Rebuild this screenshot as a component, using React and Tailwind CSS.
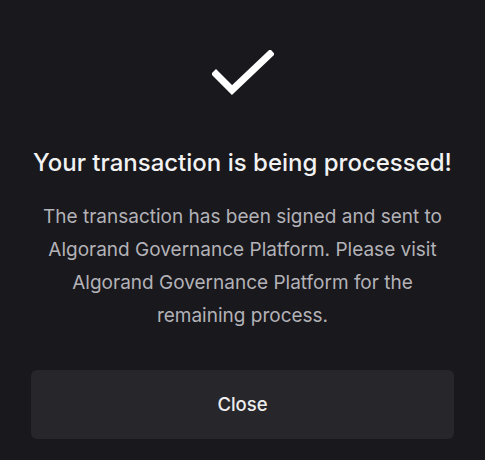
export default function App() {
  return (
    <div className="w-[485px] h-[460px] bg-[#19181d] flex flex-col items-center px-[31px] font-['Inter',sans-serif]">
      <svg width="62" height="46" viewBox="0 0 62 46" className="mt-[50px]" fill="none">
        <path d="M4 24 L20 40 L58 4" stroke="#ffffff" strokeWidth="7" strokeLinecap="square" />
      </svg>
      <h1 className="mt-[52px] text-[24px] leading-[30px] font-medium text-[#f2f2f2] whitespace-nowrap">
        Your transaction is being processed!
      </h1>
      <p className="mt-[22px] text-[19px] leading-[33px] text-[#b3b2b7] text-center whitespace-nowrap">
        The transaction has been signed and sent to
        <br />
        Algorand Governance Platform. Please visit
        <br />
        Algorand Governance Platform for the
        <br />
        remaining process.
      </p>
      <button className="mt-[38px] w-full h-[69px] rounded-[6px] bg-[#27262b] text-[18.5px] font-medium text-[#ededed]">
        Close
      </button>
    </div>
  );
}
